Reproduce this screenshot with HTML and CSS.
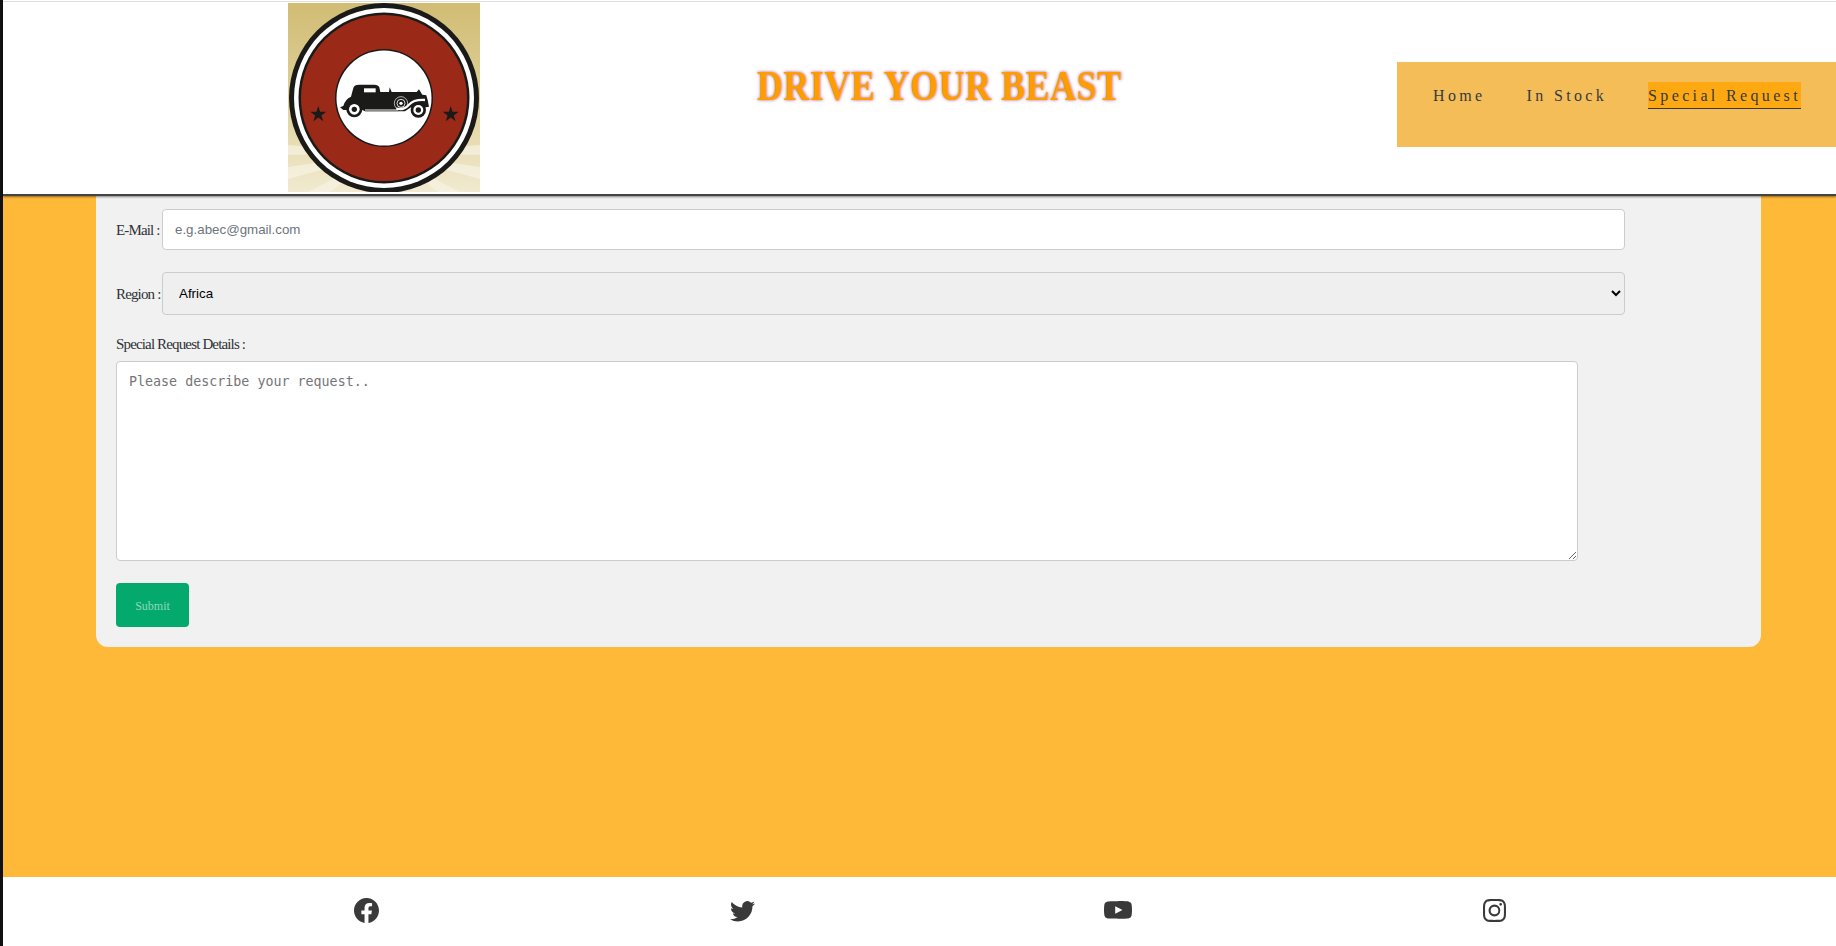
FILE: index.html
```html
<!DOCTYPE html>
<html lang="en">
<head>
<meta charset="utf-8">
<title>Drive Your Beast</title>
<link rel="stylesheet" href="styles.css">
</head>
<body>
<div class="page">
  <header class="site-header">
    <div class="logo-slot">
      <svg class="logo" viewBox="0 0 192 189" aria-label="Drive Your Beast logo">
        <defs>
          <linearGradient id="sky" x1="0" y1="0" x2="0" y2="1">
            <stop offset="0" stop-color="#d1bc74"/>
            <stop offset="0.5" stop-color="#dfd09a"/>
            <stop offset="1" stop-color="#f1ead0"/>
          </linearGradient>
        </defs>
        <rect width="192" height="189" fill="url(#sky)"/>
        <g fill="#f8f4e4" opacity="0.7">
          <polygon points="96,150 0,142 0,152"/>
          <polygon points="96,150 0,164 0,176"/>
          <polygon points="96,150 20,189 42,189"/>
          <polygon points="96,150 192,142 192,152"/>
          <polygon points="96,150 192,164 192,176"/>
          <polygon points="96,150 172,189 150,189"/>
        </g>
        <circle cx="96" cy="95" r="95" fill="#1a1a18"/>
        <circle cx="96" cy="95" r="90" fill="#fff"/>
        <circle cx="96" cy="95" r="85.500" fill="#1a1a18"/>
        <circle cx="96" cy="95" r="83" fill="#9a2a17"/>
        <circle cx="96" cy="95" r="49" fill="#1a1a18"/>
        <circle cx="96" cy="95" r="47.500" fill="#fff"/>
        <polygon fill="#1a1a18" points="30.300,103 32.200,108.800 38.300,108.800 33.400,112.400 35.200,118.200 30.300,114.600 25.400,118.200 27.200,112.400 22.300,108.800 28.400,108.800"/>
        <polygon fill="#1a1a18" points="162.700,103 164.600,108.800 170.700,108.800 165.800,112.400 167.600,118.200 162.700,114.600 157.800,118.200 159.600,112.400 154.700,108.800 160.800,108.800"/>
        <g transform="translate(-3 -3) scale(0.3333)">
          <path fill="#1a1a18" d="M165 322 L175 318 Q180 298 198 290 L205 264 Q208 254 222 254 L268 254 Q280 254 283 262 L286 276 L312 276 L314 262 L320 276 L395 276 L402 268 L412 284 L424 286 L428 300 L432 320 L422 322 L378 322 L360 334 L240 334 L232 330 L186 330 L175 330 Z"/>
          <rect x="237" y="265" width="35" height="12" fill="#fff"/>
          <rect x="240" y="327" width="100" height="7" fill="#8a8a8a"/>
          <circle cx="208" cy="328" r="24" fill="#1a1a18"/>
          <circle cx="208" cy="328" r="16" fill="#fff"/>
          <circle cx="208" cy="328" r="8" fill="#1a1a18"/>
          <circle cx="400" cy="330" r="23" fill="#1a1a18"/>
          <circle cx="400" cy="330" r="15" fill="#fff"/>
          <circle cx="400" cy="330" r="8" fill="#1a1a18"/>
          <circle cx="348" cy="310" r="20" fill="#1a1a18" stroke="#fff" stroke-width="2"/>
          <circle cx="348" cy="310" r="12" fill="none" stroke="#fff" stroke-width="2.500"/>
          <circle cx="348" cy="310" r="5" fill="#fff"/>
          <path d="M334 326 Q358 330 372 314 Q386 298 420 300" fill="none" stroke="#fff" stroke-width="7"/>
        </g>
      </svg>
    </div>
    <h1 class="brand">DRIVE YOUR BEAST</h1>
    <nav class="main-nav">
      <a class="nav-link" href="#">Home</a>
      <a class="nav-link" href="#">In Stock</a>
      <a class="nav-link is-active" href="#">Special Request</a>
    </nav>
  </header>

  <main class="content">
    <form class="request-card">
      <div class="field-row email-row">
        <label class="field-label" for="email">E-Mail :</label>
        <input class="text-input" id="email" type="text" placeholder="e.g.abec@gmail.com">
      </div>
      <div class="field-row region-row">
        <label class="field-label" for="region">Region :</label>
        <select class="select-input" id="region"><option>Africa</option></select>
      </div>
      <label class="field-label details-label" for="details">Special Request Details :</label>
      <textarea class="details-input" id="details" placeholder="Please describe your request.."></textarea>
      <button class="submit-btn" type="button">Submit</button>
    </form>
  </main>

  <footer class="site-footer">
    <a class="social" href="#" aria-label="Facebook">
      <svg class="social-icon" viewBox="0 0 16 16"><path d="M16 8.049c0-4.446-3.582-8.05-8-8.05C3.58 0-.002 3.603-.002 8.05c0 4.017 2.926 7.347 6.75 7.951v-5.625h-2.03V8.05H6.75V6.275c0-2.017 1.195-3.131 3.022-3.131.876 0 1.791.157 1.791.157v1.98h-1.009c-.993 0-1.303.621-1.303 1.258v1.51h2.218l-.354 2.326H9.25V16c3.824-.604 6.75-3.934 6.75-7.951z"/></svg>
    </a>
    <a class="social" href="#" aria-label="Twitter">
      <svg class="social-icon" viewBox="0 0 16 16"><path d="M5.026 15c6.038 0 9.341-5.003 9.341-9.334 0-.14 0-.282-.006-.422A6.685 6.685 0 0 0 16 3.542a6.658 6.658 0 0 1-1.889.518 3.301 3.301 0 0 0 1.447-1.817 6.533 6.533 0 0 1-2.087.793A3.286 3.286 0 0 0 7.875 6.03a9.325 9.325 0 0 1-6.767-3.429 3.289 3.289 0 0 0 1.018 4.382A3.323 3.323 0 0 1 .64 6.575v.045a3.288 3.288 0 0 0 2.632 3.218 3.203 3.203 0 0 1-.865.115 3.23 3.23 0 0 1-.614-.057 3.283 3.283 0 0 0 3.067 2.277A6.588 6.588 0 0 1 .78 13.58a6.32 6.32 0 0 1-.78-.045A9.344 9.344 0 0 0 5.026 15z"/></svg>
    </a>
    <a class="social" href="#" aria-label="YouTube">
      <svg class="social-icon icon-wide" viewBox="0 0 16 16" preserveAspectRatio="none"><path d="M8.051 1.999h.089c.822.003 4.987.033 6.11.335a2.01 2.01 0 0 1 1.415 1.42c.101.38.172.883.22 1.402l.01.104.022.26.008.104c.065.914.073 1.77.074 1.957v.075c-.001.194-.01 1.108-.082 2.06l-.008.105-.009.104c-.05.572-.124 1.14-.235 1.558a2.007 2.007 0 0 1-1.415 1.42c-1.16.312-5.569.334-6.18.335h-.142c-.309 0-1.587-.006-2.927-.052l-.17-.006-.087-.004-.171-.007-.171-.007c-1.11-.049-2.167-.128-2.654-.26a2.007 2.007 0 0 1-1.415-1.419c-.111-.417-.185-.986-.235-1.558L.09 9.82l-.008-.104A31.4 31.4 0 0 1 0 7.68v-.123c.002-.215.01-.958.064-1.778l.007-.103.003-.052.008-.104.022-.26.01-.104c.048-.519.119-1.023.22-1.402a2.007 2.007 0 0 1 1.415-1.42c.487-.13 1.544-.21 2.654-.26l.17-.007.172-.006.086-.003.171-.007A99.788 99.788 0 0 1 7.858 2h.193zM6.4 5.209v4.818l4.157-2.408L6.4 5.209z"/></svg>
    </a>
    <a class="social" href="#" aria-label="Instagram">
      <svg class="social-icon icon-small" viewBox="0 0 16 16"><path d="M8 0C5.829 0 5.556.01 4.703.048 3.85.088 3.269.222 2.76.42a3.917 3.917 0 0 0-1.417.923A3.927 3.927 0 0 0 .42 2.76C.222 3.268.087 3.85.048 4.7.01 5.555 0 5.827 0 8.001c0 2.172.01 2.444.048 3.297.04.852.174 1.433.372 1.942.205.526.478.972.923 1.417.444.445.89.719 1.416.923.51.198 1.09.333 1.942.372C5.555 15.99 5.827 16 8 16s2.444-.01 3.298-.048c.851-.04 1.434-.174 1.943-.372a3.916 3.916 0 0 0 1.416-.923c.445-.445.718-.891.923-1.417.197-.509.332-1.09.372-1.942C15.99 10.445 16 10.173 16 8s-.01-2.445-.048-3.299c-.04-.851-.175-1.433-.372-1.941a3.926 3.926 0 0 0-.923-1.417A3.911 3.911 0 0 0 13.24.42c-.51-.198-1.092-.333-1.943-.372C10.443.01 10.172 0 7.998 0h.003zm-.717 1.442h.718c2.136 0 2.389.007 3.232.046.78.035 1.204.166 1.486.275.373.145.64.319.92.599.28.28.453.546.598.92.11.281.24.705.275 1.485.039.843.047 1.096.047 3.231s-.008 2.389-.047 3.232c-.035.78-.166 1.203-.275 1.485a2.47 2.47 0 0 1-.599.919c-.28.28-.546.453-.92.598-.28.11-.704.24-1.485.276-.843.038-1.096.047-3.232.047s-2.39-.009-3.233-.047c-.78-.036-1.203-.166-1.485-.276a2.478 2.478 0 0 1-.92-.598 2.48 2.48 0 0 1-.6-.92c-.109-.281-.24-.705-.275-1.485-.038-.843-.046-1.096-.046-3.233 0-2.136.008-2.388.046-3.231.036-.78.166-1.204.276-1.486.145-.373.319-.64.599-.92.28-.28.546-.453.92-.598.282-.11.705-.24 1.485-.276.738-.034 1.024-.044 2.515-.045v.002zm4.988 1.328a.96.96 0 1 0 0 1.92.96.96 0 0 0 0-1.92zm-4.27 1.122a4.109 4.109 0 1 0 0 8.217 4.109 4.109 0 0 0 0-8.217zm0 1.441a2.667 2.667 0 1 1 0 5.334 2.667 2.667 0 0 1 0-5.334z"/></svg>
    </a>
  </footer>
</div>
</body>
</html>
```

FILE: styles.css
```css
* { box-sizing: border-box; }

html, body {
  margin: 0;
  height: 100%;
  overflow: hidden;
}

body {
  font-family: "Liberation Serif", serif;
  color: #343a40;
  background: #111;
}

.page {
  margin-left: 3px;
  height: 946px;
  display: flex;
  flex-direction: column;
  background: #ffb939;
}

.site-header {
  height: 196px;
  flex: none;
  position: relative;
  z-index: 2;
  display: flex;
  align-items: flex-start;
  background: #fff;
  border-top: 1px solid #fff;
  border-bottom: 2px solid #444;
  box-shadow: inset 0 1px 0 #dedede, 0 1px 2px rgba(0, 0, 0, 0.45);
}

.logo-slot {
  width: 285px;
  padding: 2px 0 0;
  margin-left: 285px;
  flex: none;
}

.logo {
  display: block;
  width: 192px;
  height: 189px;
}

.brand {
  margin: 60px 0 0 184px;
  width: 368px;
  flex: none;
  font-size: 36px;
  line-height: 50px;
  font-weight: 700;
  letter-spacing: 0.5px;
  white-space: nowrap;
  color: #ff9d00;
  text-shadow: 0 0 3px rgba(143, 31, 69, 0.8);
  transform: scaleY(1.2);
}

.main-nav {
  margin: 61px 0 0 auto;
  width: 439px;
  height: 85px;
  padding: 20px 0 0 36px;
  display: flex;
  align-items: flex-start;
  gap: 41px;
  background: #f4bd58;
}

.nav-link {
  display: block;
  height: 27px;
  padding-top: 4px;
  font-size: 16px;
  line-height: 20px;
  letter-spacing: 3.35px;
  color: #343a40;
  text-decoration: none;
  white-space: nowrap;
}

.nav-link.is-active {
  background: #ffa912;
  border-bottom: 1px solid #343a40;
}

.content {
  flex: 1;
  padding: 0 75px 0 93px;
}

.request-card {
  height: 451px;
  padding: 13px 20px 0;
  background: #f1f1f1;
  border-radius: 0 0 12px 12px;
}

.field-row {
  display: flex;
  align-items: center;
  gap: 2px;
}

.email-row { height: 41px; }
.region-row { height: 43px; margin-top: 22px; }

.field-label {
  display: block;
  width: 44px;
  flex: none;
  font-size: 15px;
  line-height: 18px;
  letter-spacing: -0.85px;
  color: #2f3236;
  white-space: nowrap;
}

.details-label {
  width: auto;
  margin-top: 20px;
}

.text-input,
.select-input {
  width: 1463px;
  flex: none;
  height: 100%;
  border: 1px solid #ccc;
  border-radius: 4px;
  font-family: "Liberation Sans", sans-serif;
  font-size: 13.333px;
}

.text-input {
  padding: 0 12px;
  background: #fff;
}

.text-input::placeholder {
  color: #6c757d;
}

.select-input {
  padding: 0 12px;
  background-color: #efefef;
  color: #000;
}

.details-input {
  display: block;
  width: 1462px;
  height: 200px;
  margin-top: 8px;
  padding: 12px;
  border: 1px solid #ccc;
  border-radius: 4px;
  background: #fff;
  font-family: "DejaVu Sans Mono", monospace;
  font-size: 13.333px;
  line-height: 16px;
}

.details-input::placeholder {
  color: #757575;
}

.submit-btn {
  display: block;
  width: 73px;
  height: 44px;
  margin-top: 22px;
  padding: 2px 0 0;
  border: 0;
  border-radius: 4px;
  background: #04aa6d;
  color: #8ed8b8;
  font-family: "Liberation Serif", serif;
  font-size: 12px;
}

.site-footer {
  height: 69px;
  flex: none;
  display: grid;
  grid-template-columns: repeat(4, 1fr);
  align-items: start;
  padding: 21px 154px 0 176px;
  background: #fff;
}

.social {
  display: flex;
  justify-content: center;
  align-items: center;
  height: 25px;
}

.social-icon {
  width: 25px;
  height: 25px;
  fill: #3a3a3a;
  display: block;
}

.icon-wide {
  width: 28px;
}

.icon-small {
  width: 23px;
  height: 23px;
}
```
